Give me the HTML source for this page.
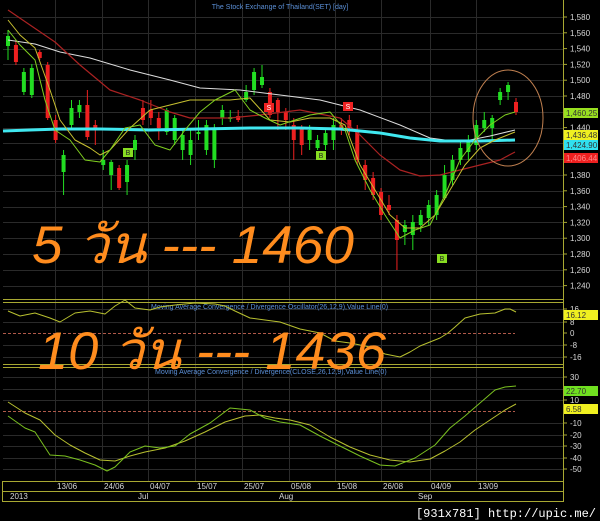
<!DOCTYPE html>
<html><head><meta charset="utf-8">
<style>
html,body{margin:0;padding:0;background:#000;width:600px;height:521px;overflow:hidden}
svg{display:block}
.ax{font-family:"Liberation Sans",sans-serif;font-size:8px;fill:#d8d8d8}
.tt{font-family:"Liberation Sans",sans-serif;font-size:7px;fill:#5b8fd6}
.big{font-family:"Liberation Sans","Noto Sans CJK SC",sans-serif;font-style:italic;font-size:53px;fill:#ff8c1e}
</style></head><body>
<svg id="s" width="600" height="521" xmlns="http://www.w3.org/2000/svg">
<rect width="600" height="521" fill="#000"/>
<g id="grid" stroke="#2a2a2a" stroke-width="1"></g>
<g stroke="#a8a832" stroke-width="1" fill="none">
<line x1="563.5" y1="0" x2="563.5" y2="501"/>
<line x1="3" y1="299.5" x2="563" y2="299.5"/>
<line x1="3" y1="302.5" x2="563" y2="302.5"/>
<line x1="3" y1="364.5" x2="563" y2="364.5"/>
<line x1="3" y1="367.5" x2="563" y2="367.5"/>
<rect x="2.5" y="481.5" width="561" height="10"/>
<rect x="2.5" y="491.5" width="561" height="10"/>
</g>
<text class="tt" x="280" y="9" text-anchor="middle">The Stock Exchange of Thailand(SET) [day]</text>
<text class="tt" x="151" y="309">Moving Average Convergence / Divergence Oscillator(26,12,9),Value Line(0)</text>
<text class="tt" x="155" y="374">Moving Average Convergence / Divergence(CLOSE,26,12,9),Value Line(0)</text>
<line x1="3" y1="333.5" x2="515" y2="333.5" stroke="#b05a4a" stroke-dasharray="3,2"/>
<line x1="3" y1="411.5" x2="515" y2="411.5" stroke="#b05a4a" stroke-dasharray="3,2"/>
<g id="candles"></g>
<g fill="none" stroke-linejoin="round">
<polyline stroke="#dddddd" stroke-width="1" points="8,40 35,44 60,52 90,58 130,70 170,80 200,88 240,90 280,95 320,100 360,110 400,125 430,138 460,142 490,136 515,130"/>
<polyline stroke="#aa2222" stroke-width="1.2" points="8,10 30,25 55,42 80,65 110,90 140,100 170,112 190,118 230,118 260,115 300,110 340,118 360,135 380,155 400,170 420,176 440,175 460,170 480,165 500,160 515,152"/>
<polyline stroke="#40e8f0" stroke-width="3" points="3,131 30,130 60,129 100,129 150,130 200,129 250,128 300,128 340,129 380,133 410,138 440,141 480,141 515,140"/>
<polyline stroke="#c8c030" stroke-width="1" points="8,20 20,35 35,48 50,90 60,120 75,140 90,148 100,155 110,150 130,128 150,110 170,105 190,100 210,100 230,100 250,98 270,120 290,122 310,118 330,118 345,125 360,165 375,190 390,215 405,228 420,228 435,215 450,190 465,165 480,148 495,140 515,132"/>
<polyline stroke="#80d020" stroke-width="1" points="8,30 20,45 35,60 45,100 55,130 70,140 85,160 100,162 110,150 125,128 140,125 155,145 170,150 185,130 200,112 215,100 235,90 250,110 265,118 280,125 295,120 310,115 330,112 345,130 355,160 370,190 385,215 400,238 415,230 430,225 445,195 460,160 475,140 490,125 505,115 515,112"/>
<polyline stroke="#b8c030" stroke-width="1" points="8,311 20,316 35,313 50,318 60,322 75,313 90,311 105,314 115,306 125,300 135,308 150,310 160,307 175,305 195,303 215,304 225,306 235,311 250,318 265,320 280,322 300,329 320,333 335,341 350,343 370,347 385,354 400,357 410,352 420,346 430,342 440,338 448,333 455,327 465,318 480,314 495,313 505,309 510,309 516,312"/>
<polyline stroke="#b8c030" stroke-width="1" points="8,402 25,413 40,420 55,435 70,445 85,453 100,460 115,461 130,456 145,452 165,448 185,441 205,432 225,422 245,416 260,415 275,418 290,420 310,425 330,437 350,447 370,455 390,460 410,462 430,459 445,451 460,442 475,430 490,420 505,410 516,404"/>
<polyline stroke="#7ac020" stroke-width="1" points="8,416 25,428 35,432 50,455 65,456 80,460 95,465 107,471 115,467 130,452 145,446 160,448 175,446 190,434 210,423 230,408 240,409 250,410 265,418 280,422 300,425 320,436 340,446 360,456 380,465 395,466 415,458 435,445 450,428 465,416 480,403 495,390 505,387 516,386"/>
</g>
<ellipse cx="508" cy="118" rx="35" ry="48" fill="none" stroke="#c08050" stroke-width="1"/>
<g font-family="Liberation Sans,sans-serif" font-size="7" text-anchor="middle">
<rect x="123" y="148" width="10" height="9" fill="#88dd22"/><text x="128" y="155" fill="#222">B</text>
<rect x="316" y="151" width="10" height="9" fill="#88dd22"/><text x="321" y="158" fill="#222">B</text>
<rect x="437" y="254" width="10" height="9" fill="#88dd22"/><text x="442" y="261" fill="#222">B</text>
<rect x="264" y="103" width="10" height="9" fill="#ee2222"/><text x="269" y="110" fill="#fff">S</text>
<rect x="343" y="102" width="10" height="9" fill="#ee2222"/><text x="348" y="109" fill="#fff">S</text>
</g>
<g id="axis"></g>
<g font-family="Liberation Sans,sans-serif" font-size="8">
<rect x="564" y="108" width="34" height="10" fill="#99e020"/><text x="566" y="116" fill="#333">1,460.25</text>
<rect x="564" y="130" width="34" height="10" fill="#f0f020"/><text x="566" y="138" fill="#333">1,436.48</text>
<rect x="564" y="140" width="34" height="10" fill="#30e0f0"/><text x="566" y="148" fill="#333">1,424.90</text>
<rect x="564" y="153" width="34" height="10" fill="#ee2020"/><text x="566" y="161" fill="#f88">1,406.44</text>
<rect x="564" y="310" width="34" height="10" fill="#f0f020"/><text x="566" y="318" fill="#333">16.12</text>
<rect x="564" y="386" width="34" height="10" fill="#70e020"/><text x="566" y="394" fill="#333">22.70</text>
<rect x="564" y="404" width="34" height="10" fill="#f0f020"/><text x="566" y="412" fill="#333">6.58</text>
</g>
<g class="ax" font-size="7">
<text x="57" y="489">13/06</text><text x="104" y="489">24/06</text><text x="150" y="489">04/07</text><text x="197" y="489">15/07</text><text x="244" y="489">25/07</text><text x="291" y="489">05/08</text><text x="337" y="489">15/08</text><text x="383" y="489">26/08</text><text x="431" y="489">04/09</text><text x="478" y="489">13/09</text>
<text x="10" y="499">2013</text><text x="138" y="499">Jul</text><text x="279" y="499">Aug</text><text x="418" y="499">Sep</text>
</g>
<text class="big" x="32" y="263" textLength="322" lengthAdjust="spacingAndGlyphs">5 วัน --- 1460</text>
<text class="big" x="38" y="369" textLength="348" lengthAdjust="spacingAndGlyphs">10 วัน --- 1436</text>
<text x="596" y="517" text-anchor="end" font-family="Liberation Mono,monospace" font-size="12" fill="#fff">[931x781] http://upic.me/</text>
</svg>
<script>
var ns="http://www.w3.org/2000/svg";
function el(p,t,a){var e=document.createElementNS(ns,t);for(var k in a)e.setAttribute(k,a[k]);p.appendChild(e);return e;}
var g=document.getElementById('grid');
var vx=[55,102,148,195,242,289,335,381,430,476];
vx.forEach(function(x){el(g,'line',{x1:x+.5,y1:0,x2:x+.5,y2:481});});
for(var v=1580;v>=1240;v-=20){var y=17+(1580-v)*0.79;el(g,'line',{x1:3,y1:Math.round(y)+.5,x2:563,y2:Math.round(y)+.5});}
[309,322,345,357].forEach(function(y){el(g,'line',{x1:3,y1:y+.5,x2:563,y2:y+.5});});
[377,389,400,423,435,446,458,469].forEach(function(y){el(g,'line',{x1:3,y1:y+.5,x2:563,y2:y+.5});});
var ax=document.getElementById('axis');
for(var v=1580;v>=1240;v-=20){var y=17+(1580-v)*0.79;if(v==1460||v==1420||v==1400)continue;
el(ax,'line',{x1:563,y1:y,x2:567,y2:y,stroke:'#a8a832'});var t=el(ax,'text',{x:570,y:y+3,'class':'ax'});t.textContent=(v+'').replace(/(\d)(\d{3})$/,'$1,$2');}
[[16,309],[8,322],[0,333],[-8,345],[-16,357],[30,377],[10,400],[-10,423],[-20,435],[-30,446],[-40,458],[-50,469]].forEach(function(p){
el(ax,'line',{x1:563,y1:p[1],x2:567,y2:p[1],stroke:'#a8a832'});var t=el(ax,'text',{x:570,y:p[1]+3,'class':'ax'});t.textContent=p[0];});
var c=[[46,36,30,60],[45,62,40,65],[92,72,68,95],[95,68,64,98],[52,58,50,60],[65,118,62,120],[120,140,115,143],[172,155,150,195],[125,108,100,130],[112,105,100,118],[105,137,90,140],[125,130,120,145],[165,160,150,170],[175,162,160,190],[168,188,165,190],[182,165,160,195],[150,140,135,160],[108,120,100,125],[110,118,100,125],[118,128,112,140],[132,110,108,135],[140,118,115,145],[150,135,130,160],[155,140,130,165],[133,132,120,140],[150,125,120,155],[160,128,124,168],[118,110,105,125],[118,117,110,122],[116,120,110,122],[100,92,85,102],[90,72,68,95],[85,77,65,88],[92,115,88,118],[100,112,98,130],[112,120,108,130],[125,140,118,160],[128,145,125,155],[140,130,125,150],[148,140,135,150],[145,133,128,150],[140,125,118,150],[125,130,118,135],[120,128,115,135],[130,160,125,165],[165,180,160,190],[178,195,172,200],[192,215,188,220],[205,210,195,215],[220,240,215,270],[232,225,220,245],[235,222,215,250],[225,215,210,232],[218,205,200,225],[215,195,190,220],[198,175,165,200],[180,160,155,185],[160,148,142,165],[152,140,135,160],[145,125,120,150],[128,120,112,132],[128,118,115,140],[100,92,88,105],[92,85,82,100],[102,112,98,115]];
var cg=document.getElementById('candles');
var n=c.length;
for(var i=0;i<n;i++){var x=8+i*(508/(n-1));var d=c[i];var up=d[1]<d[0];var col=up?'#22dd22':'#ee2020';
el(cg,'line',{x1:x,y1:d[2],x2:x,y2:d[3],stroke:col,'stroke-width':1});
var t=Math.min(d[0],d[1]),h=Math.max(2,Math.abs(d[1]-d[0]));el(cg,'rect',{x:x-2,y:t,width:4,height:h,fill:col});}
</script>
</body></html>
